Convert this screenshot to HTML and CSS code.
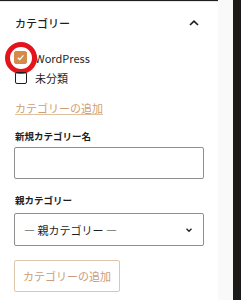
FILE: index.html
```html
<!DOCTYPE html>
<html lang="ja">
<head>
  <meta charset="UTF-8">
  <title>カテゴリー</title>
  <link rel="stylesheet" href="styles.css">
</head>
<body>
  <div class="screen">
    <div class="panel">
      <div class="panel-header">
        <h2>カテゴリー</h2>
        <svg class="chevron" width="10" height="6" viewBox="0 0 10 6"><path d="M1 5 L5 1.2 L9 5" fill="none" stroke="#1e1e1e" stroke-width="1.7"/></svg>
      </div>

      <div class="checklist">
        <label class="check-row">
          <span class="mark">
            <span class="box checked">
              <svg width="9" height="9" viewBox="0 0 10 10"><path d="M2 5.2 L4.2 7.3 L8.2 2.6" fill="none" stroke="#fff" stroke-width="1.4"/></svg>
            </span>
            <span class="ring"></span>
          </span>
          WordPress
        </label>
        <label class="check-row">
          <span class="mark"><span class="box"></span></span>
          未分類
        </label>
      </div>

      <a class="add-link" href="#">カテゴリーの追加</a>

      <div class="field field-name">
        <div class="field-label">新規カテゴリー名</div>
        <div class="input"></div>
      </div>

      <div class="field field-parent">
        <div class="field-label">親カテゴリー</div>
        <div class="select">
          <span>— 親カテゴリー —</span>
          <svg width="8" height="6" viewBox="0 0 8 6"><path d="M1.5 1.8 L4 4.3 L6.5 1.8" fill="none" stroke="#1e1e1e" stroke-width="1.3"/></svg>
        </div>
      </div>

      <button class="add-button">カテゴリーの追加</button>
    </div>
    <div class="gutter"></div>
    <div class="dark"></div>
  </div>
</body>
</html>
```

FILE: styles.css
```css
body {
  margin: 0;
  font-family: 'Noto Sans CJK JP', 'Noto Sans', sans-serif;
  color: #1e1e1e;
  background: #1e1e1e;
}

.screen {
  display: flex;
  height: 300px;
  overflow: hidden;
}

.panel {
  width: 218px;
  background: #fff;
  border-top: 1px solid #e6e6e6;
  margin-top: 1px;
  padding: 0 14px 0 15px;
  box-sizing: border-box;
}

.gutter {
  width: 15px;
  background: #f9f9f9;
}

.dark {
  flex: 1;
  background: #1c1a19;
}

.panel-header {
  display: flex;
  justify-content: space-between;
  align-items: center;
  height: 42px;
  padding-right: 5px;
}

h2 {
  margin: 0;
  font-size: 11px;
  font-weight: 500;
}

.checklist {
  display: flex;
  flex-direction: column;
  gap: 7px;
  margin-top: 7px;
}

.check-row {
  display: flex;
  align-items: center;
  gap: 8px;
  font-size: 11px;
  height: 13px;
}

.mark {
  position: relative;
  width: 12px;
  height: 12px;
}

.box {
  display: flex;
  align-items: center;
  justify-content: center;
  width: 12px;
  height: 12px;
  border: 1px solid #1e1e1e;
  border-radius: 2px;
  box-sizing: border-box;
}

.box.checked {
  width: 13px;
  height: 13px;
  margin: -1px 0 0 -1px;
  background: #d58a4a;
  border-color: #d58a4a;
}

/* 注目用の赤い丸 */
.ring {
  position: absolute;
  left: -10px;
  top: -10px;
  width: 22px;
  height: 22px;
  border: 5px solid #e3141c;
  border-radius: 50%;
}

.add-link {
  display: block;
  margin-top: 16px;
  font-size: 11px;
  line-height: 16px;
  color: #cf9f74;
  text-decoration: underline;
  text-decoration-color: #dfc0a2;
}

.field-label {
  font-size: 9.5px;
  font-weight: 700;
  line-height: 14px;
}

.field-name {
  margin-top: 13px;
}

.field-name .field-label {
  margin-bottom: 4px;
}

.field-parent {
  margin-top: 14px;
}

.field-parent .field-label {
  margin-bottom: 6px;
}

.input,
.select {
  width: 190px;
  height: 32px;
  border: 1px solid #8f8f8f;
  border-radius: 2px;
  box-sizing: border-box;
  margin-left: -1px;
}

.select {
  height: 33px;
  display: flex;
  align-items: center;
  justify-content: space-between;
  padding: 0 10px 0 9px;
  font-size: 11px;
}

.add-button {
  display: block;
  margin-top: 14px;
  margin-left: -1px;
  height: 32px;
  padding: 0 8px;
  background: #fff;
  border: 1px solid #dec6ae;
  border-radius: 2px;
  font-family: inherit;
  font-size: 11px;
  color: #cb9d7a;
}
```
